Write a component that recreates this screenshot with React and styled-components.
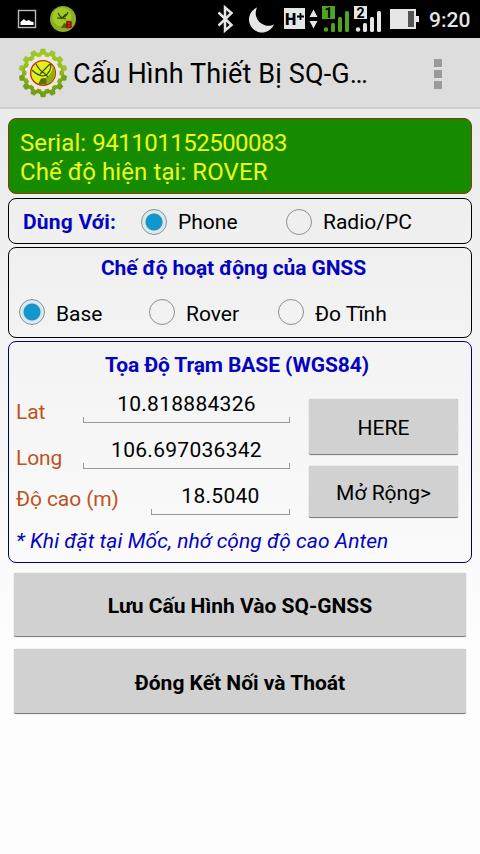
import React, {useState} from 'react';
import styled, {createGlobalStyle, css} from 'styled-components';

const GlobalStyle = createGlobalStyle`
  * {
    box-sizing: border-box;
  }
  body {
    margin: 0;
    font-family: Roboto, "Noto Sans", sans-serif;
    color: #000;
  }
`;
const Screen = styled.div`
  display: flex;
  flex-direction: column;
  width: 480px;
  height: 854px;
  overflow: hidden;
  background: linear-gradient(#e8e8e8, #fdfdfd 75%);
`;
const StatusBar = styled.header`
  display: flex;
  align-items: center;
  height: 38px;
  flex: none;
  background: #000;
  svg {
    display: block;
    flex: none;
  }
`;
const Clock = styled.span`
  margin-left: 9px;
  padding-top: 2px;
  font-size: 21px;
  line-height: 36px;
  font-weight: 500;
  color: #e6e6e6;
`;
const ActionBar = styled.div`
  display: flex;
  align-items: center;
  flex: none;
  height: 71px;
  padding: 0 38px 0 18px;
  background: #ddd;
  border-bottom: 2px solid #cfcfcf;
`;
const Title = styled.h1`
  flex: 1;
  margin: 2px 0 0 5px;
  font-size: 27px;
  font-weight: 400;
  line-height: 36px;
  letter-spacing: 0.14px;
  white-space: nowrap;
`;
const Overflow = styled.div`
  display: flex;
  flex-direction: column;
  gap: 3px;
  margin-top: 3px;
  i {
    width: 8px;
    height: 8px;
    background: #9a9a9a;
  }
`;
const Content = styled.main`
  display: flex;
  flex-direction: column;
  padding: 9px 8px 0;
`;
const Panel = styled.section`
  height: ${p => p.$height}px;
  margin-bottom: ${p => p.$gap}px;
  border: 1px solid ${p => p.$line || '#000'};
  border-radius: 8px;
`;
const SerialPanel = styled(Panel)`
  padding: 10px 11px;
  background: #178b00;
  color: #e8fb1c;
  font-size: 24px;
  line-height: 29px;
`;
const SerialLine = styled.div`
  letter-spacing: 0.08px;
`;
const SerialNumber = styled.span`
  letter-spacing: -0.5px;
`;
const Heading = styled.h2`
  margin: 0;
  padding: ${p => p.$top}px ${p => p.$right}px 0 0;
  text-align: center;
  font-size: 21px;
  line-height: 26px;
  font-weight: 700;
  letter-spacing: -0.11px;
  color: #0404bf;
`;
const RadioRow = styled.div`
  display: grid;
  grid-template-columns: ${p => p.$columns};
  align-items: center;
  height: ${p => p.$height}px;
  padding-left: ${p => p.$left}px;
`;
const RowLabel = styled.span`
  font-size: 21px;
  font-weight: 700;
  letter-spacing: 0.2px;
  color: #0404bf;
`;
const Option = styled.button`
  display: flex;
  align-items: center;
  gap: 11px;
  padding: 0;
  border: 0;
  background: none;
  color: #000;
  font: 21px/26px Roboto, sans-serif;
  white-space: nowrap;
  span {
    padding-top: ${p => p.$drop || 0}px;
  }
`;
const Dot = styled.i`
  flex: none;
  width: 26px;
  height: 26px;
  border: 1.5px solid #8f8f8f;
  border-radius: 50%;
  ${p => p.$on && css`
    background: radial-gradient(circle, #0a99d2 0 5.5px, #2590b8 7px 8px, #d5eaf2 9px);
  `}
`;
const Position = styled.div`
  display: grid;
  grid-template-columns: 274px 149px;
  column-gap: 19px;
  padding-left: 7px;
`;
const Fields = styled.div`
  display: flex;
  flex-direction: column;
`;
const Field = styled.label`
  display: flex;
  justify-content: space-between;
  align-items: flex-end;
  height: 46px;
  font-size: 21px;
  line-height: 26px;
  color: #bd531d;
  > span {
    padding-bottom: ${p => p.$drop}px;
    margin-bottom: ${p => p.$sink || 0}px;
    letter-spacing: -0.1px;
  }
`;
const Input = styled.input`
  width: ${p => p.$width}px;
  height: 38px;
  margin-bottom: 1px;
  padding: 0 0 1px;
  border: 0;
  outline: 0;
  text-align: center;
  font: 21px Roboto, sans-serif;
  letter-spacing: 0.28px;
  color: #000;
  background:
    linear-gradient(#999, #999) left bottom / 1px 6px no-repeat,
    linear-gradient(#999, #999) right bottom / 1px 6px no-repeat,
    linear-gradient(#999, #999) left bottom / 100% 1px no-repeat;
`;
const Side = styled.div`
  display: flex;
  flex-direction: column;
  gap: 11px;
  padding-top: 21px;
`;
const Button = styled.button`
  display: block;
  width: 100%;
  height: ${p => p.$height}px;
  padding: 3px 0 0;
  border: 0;
  border-bottom: 1px solid #7d7d7d;
  border-radius: 2px;
  background: #d1d1d1;
  box-shadow: 0 0 1px #888;
  color: #000;
  font: ${p => (p.$bold ? 700 : 400)} 21px Roboto, sans-serif;
`;
const Note = styled.p`
  margin: 10px 0 0 7px;
  font-size: 21px;
  line-height: 26px;
  font-style: italic;
  letter-spacing: 0.05px;
  color: #0404bf;
`;
const Actions = styled.div`
  display: flex;
  flex-direction: column;
  gap: 12px;
  padding: 0 6px;
`;

const teeth = Array.from({length: 14}, (_, i) => (i * 360) / 14);

const GearLogo = () => (
  <svg width="50" height="50" viewBox="-25 -25 50 50">
    <defs>
      <linearGradient id="rim" x1="0" y1="-24" x2="0" y2="24" gradientUnits="userSpaceOnUse">
        <stop offset="0" stopColor="#a5cf2c" />
        <stop offset="1" stopColor="#6f9a12" />
      </linearGradient>
    </defs>
    <circle r="21" fill="url(#rim)" />
    {teeth.map(a => (
      <path key={a} d="M-3.4-20L-2.3-24.2H2.3L3.4-20Z" fill={a > 90 && a < 270 ? '#759f15' : '#9cc628'} transform={`rotate(${a})`} />
    ))}
    <circle r="16.5" fill="#efe6dc" />
    {teeth.map(a => (
      <circle key={a} cy="-16.6" r="1.9" fill="#efe6dc" transform={`rotate(${a})`} />
    ))}
    <circle r="12.4" fill="#dff01a" stroke="#b5301b" strokeWidth="1.3" />
    <path d="M10-7A12 12 0 0 1 5 11L1 6Q9 2 10-7Z" fill="#8fae12" />
    <path d="M-11-3Q-5 3 1 3Q8 0 8-9M-7-9Q-4-3 1 0L5 4M7-9L-3 1" fill="none" stroke="#3d4d12" strokeWidth="1.2" />
    <path d="M-5 11.5L-2 5.5L3 5L4 11.5Z" fill="#55700f" />
  </svg>
);

const StatusLeft = () => (
  <svg width="218" height="38" viewBox="0 0 218 38">
    <rect x="18.5" y="10.5" width="17" height="17" fill="none" stroke="#bbb" strokeWidth="1.4" />
    <path d="M20.5 25V22L24 19L26 21L29 20L31 21.5L33.5 22V25Z" fill="#fff" />
    <circle cx="63" cy="19" r="13" fill="#8cae22" />
    <circle cx="62" cy="17" r="9.5" fill="#a3c924" />
    <path d="M58 13Q60 18 66 19M57 18Q66 19 68 12M66 14L61 19" fill="none" stroke="#35470e" strokeWidth="1.2" />
    <path d="M61 28L64 23L68 24V28Z" fill="#4c6216" />
    <text x="66" y="27.5" fontSize="9.5" fontWeight="900" fontFamily="Roboto" fill="#9c1208" stroke="#9c1208" strokeWidth="0.6">B</text>
  </svg>
);

const StatusRight = () => (
  <svg width="202" height="38" viewBox="218 0 202 38">
    <path d="M218.5 12.5L231.5 25L225 30.5V7.5L231.5 13L218.5 25.5" fill="none" stroke="#e6e6e6" strokeWidth="2.5" />
    <path d="M257 7.5A13 13 0 1 0 274 24.5A12.7 12.7 0 0 1 257 7.5Z" fill="#e6e6e6" />
    <rect x="284" y="8" width="21" height="21" fill="#e6e6e6" />
    <text x="285" y="24.5" fontSize="16" fontWeight="900" fontFamily="Roboto" fill="#000">H</text>
    <path d="M297 16.5H304M300.5 13V20" stroke="#000" strokeWidth="1.8" />
    <path d="M309.5 17L313.5 9.5L317.5 17ZM309.5 21L313.5 28.5L317.5 21Z" fill="#e6e6e6" />
    {[['1', 322, '#4fa51f'], ['2', 354, '#e6e6e6']].map(([num, x, color]) => (
      <g key={num} fill={color}>
        <rect x={x} y="6" width="13" height="13" />
        <text x={x + 2.5} y="17.5" fontSize="14" fontWeight="700" fontFamily="Roboto" fill="#000">{num}</text>
        <circle cx={x + 4} cy="29.5" r="2.2" />
        <rect x={x + 9} y="23" width="4" height="9" rx="1.5" />
        <rect x={x + 16} y="17" width="4" height="15" rx="1.5" />
        <rect x={x + 23} y="11" width="4" height="21" rx="1.5" />
      </g>
    ))}
    <path d="M390 9H416V16H419V22H416V29H390Z" fill="#e6e6e6" />
    <rect x="408" y="11" width="6" height="16" fill="#555" />
  </svg>
);

const Radio = ({on, children, ...rest}) => (
  <Option type="button" role="radio" aria-checked={on} {...rest}>
    <Dot $on={on} />
    <span>{children}</span>
  </Option>
);

const fields = [
  {label: 'Lat', value: '10.818884326', width: 207, drop: 0, sink: -1},
  {label: 'Long', value: '106.697036342', width: 207, drop: 0, sink: -1},
  {label: 'Độ cao (m)', value: '18.5040', width: 139, drop: 4},
];

const App = () => {
  const [target, setTarget] = useState('Phone');
  const [mode, setMode] = useState('Base');
  return (
    <Screen>
      <GlobalStyle />
      <StatusBar>
        <StatusLeft />
        <StatusRight />
        <Clock>9:20</Clock>
      </StatusBar>
      <ActionBar>
        <GearLogo />
        <Title>Cấu Hình Thiết Bị SQ-G…</Title>
        <Overflow><i /><i /><i /></Overflow>
      </ActionBar>
      <Content>
        <SerialPanel $height={76} $gap={4} $line="#8b3a0e">
          <SerialLine>Serial: <SerialNumber>941101152500083</SerialNumber></SerialLine>
          <SerialLine>Chế độ hiện tại: ROVER</SerialLine>
        </SerialPanel>
        <Panel $height={46} $gap={3}>
          <RadioRow $columns="118px 145px 1fr" $height={45} $left={14}>
            <RowLabel>Dùng Với:</RowLabel>
            {['Phone', 'Radio/PC'].map(name => (
              <Radio key={name} on={target === name} onClick={() => setTarget(name)}>{name}</Radio>
            ))}
          </RadioRow>
        </Panel>
        <Panel $height={91} $gap={3}>
          <Heading $top={7} $right={13}>Chế độ hoạt động của GNSS</Heading>
          <RadioRow $columns="130px 129px 1fr" $height={62} $left={10}>
            {['Base', 'Rover', 'Đo Tĩnh'].map(name => (
              <Radio key={name} $drop={3} on={mode === name} onClick={() => setMode(name)}>{name}</Radio>
            ))}
          </RadioRow>
        </Panel>
        <Panel $height={222} $gap={10} $line="#00006e">
          <Heading $top={10} $right={6}>Tọa Độ Trạm BASE (WGS84)</Heading>
          <Position>
            <Fields>
              {fields.map(({label, value, width, drop, sink}) => (
                <Field key={label} $drop={drop} $sink={sink}>
                  <span>{label}</span>
                  <Input $width={width} defaultValue={value} />
                </Field>
              ))}
            </Fields>
            <Side>
              <Button $height={56}>HERE</Button>
              <Button $height={52}>Mở Rộng&gt;</Button>
            </Side>
          </Position>
          <Note>* Khi đặt tại Mốc, nhớ cộng độ cao Anten</Note>
        </Panel>
        <Actions>
          <Button $bold $height={64}>Lưu Cấu Hình Vào SQ-GNSS</Button>
          <Button $bold $height={65}>Đóng Kết Nối và Thoát</Button>
        </Actions>
      </Content>
    </Screen>
  );
};

export default App;
